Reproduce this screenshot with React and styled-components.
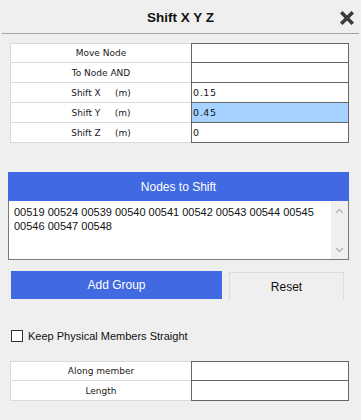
import React from "react";
import styled, { createGlobalStyle } from "styled-components";

const Global = createGlobalStyle`
  html, body {
    margin: 0;
    padding: 0;
    background: #efefef;
  }
  body {
    font-family: "Liberation Sans", Arial, sans-serif;
    color: #111;
  }
`;

const Dialog = styled.div`
  width: 361px;
  height: 420px;
  background: #efefef;
  display: flex;
  flex-direction: column;
`;

const TitleBar = styled.div`
  height: 33px;
  margin: 0 2px;
  border-bottom: 1px solid #a3a3a3;
  display: flex;
  align-items: center;
  justify-content: center;
  position: relative;
`;

const Title = styled.div`
  font-size: 13.5px;
  font-weight: bold;
  color: #111;
  padding-top: 1px;
`;

const CloseButton = styled.div`
  position: absolute;
  right: 5px;
  top: 11px;
  width: 14px;
  height: 14px;
  display: flex;
`;

const Grid = styled.div`
  display: grid;
  grid-template-columns: 181px 158px;
  margin: ${(p) => p.$margin};
`;

const LabelCell = styled.div`
  height: 20px;
  box-sizing: border-box;
  background: #fff;
  border: 1px solid #dadada;
  border-right: none;
  border-top: ${(p) => (p.$first ? "1px solid #dadada" : "none")};
  display: flex;
  align-items: center;
  justify-content: center;
  font-family: "DejaVu Sans", Verdana, sans-serif;
  font-size: 9px;
  color: #1a1a1a;
  white-space: pre;
`;

const ValueCell = styled.div`
  height: 20px;
  box-sizing: border-box;
  background: ${(p) => (p.$selected ? "#a6d2ff" : "#fff")};
  border: 1px solid #666;
  border-top: ${(p) => (p.$first ? "1px solid #666" : "none")};
  display: flex;
  align-items: center;
  padding-left: 1px;
  font-family: "DejaVu Sans", Verdana, sans-serif;
  font-size: 9.5px;
  letter-spacing: 0.6px;
  color: #111;
`;

const NodesPanel = styled.div`
  margin: 29px 12px 0 8px;
  display: flex;
  flex-direction: column;
`;

const NodesHeader = styled.div`
  height: 29px;
  background: #4169e1;
  color: #fff;
  display: flex;
  align-items: center;
  justify-content: center;
  font-size: 12px;
`;

const NodesBox = styled.div`
  height: 58px;
  background: #fff;
  border: 1px solid #7a7a7a;
  border-top: none;
  display: flex;
`;

const NodesText = styled.div`
  flex: 1;
  padding: 4px 0 0 5px;
  font-size: 11px;
  line-height: 14px;
  color: #111;
`;

const Scrollbar = styled.div`
  width: 17px;
  background: #f0f0f0;
  display: flex;
  flex-direction: column;
  justify-content: space-between;
  align-items: center;
  padding: 7px 0 6px;
`;

const ButtonRow = styled.div`
  margin: 11px 17px 0 11px;
  display: flex;
  gap: 7px;
`;

const Button = styled.div`
  height: 28px;
  box-sizing: border-box;
  display: flex;
  align-items: center;
  justify-content: center;
  font-size: 12px;
  width: ${(p) => p.$width};
  background: ${(p) => (p.$primary ? "#4169e1" : "#efefef")};
  color: ${(p) => (p.$primary ? "#fff" : "#111")};
  border: ${(p) => (p.$primary ? "none" : "1px solid #dcdcdc")};
  border-bottom: none;
  margin-top: ${(p) => (p.$primary ? "0" : "1px")};
`;

const CheckRow = styled.label`
  margin: 30px 0 0 11px;
  display: flex;
  align-items: center;
  gap: 5px;
  font-size: 11px;
  color: #111;
`;

const Box = styled.span`
  width: 12px;
  height: 12px;
  box-sizing: border-box;
  border: 1px solid #333;
  background: #fff;
`;

function CloseIcon() {
  return (
    <svg width="14" height="14" viewBox="0 0 14 14">
      <path
        d="M2.5 2.5 L11.5 11.5 M11.5 2.5 L2.5 11.5"
        stroke="#3a3a3a"
        strokeWidth="3.6"
        strokeLinecap="square"
      />
    </svg>
  );
}

function Chevron({ up }) {
  return (
    <svg width="9" height="6" viewBox="0 0 9 6">
      <path
        d={up ? "M1 5 L4.5 1.5 L8 5" : "M1 1 L4.5 4.5 L8 1"}
        fill="none"
        stroke="#b5b5b5"
        strokeWidth="1.4"
      />
    </svg>
  );
}

const shiftRows = [
  { label: "Move Node", value: "" },
  { label: "To Node AND", value: "" },
  { label: "Shift X     (m)", value: "0.15" },
  { label: "Shift Y     (m)", value: "0.45", selected: true },
  { label: "Shift Z     (m)", value: "0" },
];

const memberRows = [
  { label: "Along member", value: "" },
  { label: "Length", value: "" },
];

function Table({ rows, margin }) {
  return (
    <Grid $margin={margin}>
      {rows.map((r, i) => (
        <React.Fragment key={r.label}>
          <LabelCell $first={i === 0}>{r.label}</LabelCell>
          <ValueCell $first={i === 0} $selected={r.selected}>
            {r.value}
          </ValueCell>
        </React.Fragment>
      ))}
    </Grid>
  );
}

export default function App() {
  return (
    <>
      <Global />
      <Dialog>
        <TitleBar>
          <Title>Shift X Y Z</Title>
          <CloseButton>
            <CloseIcon />
          </CloseButton>
        </TitleBar>

        <Table rows={shiftRows} margin="9px 0 0 10px" />

        <NodesPanel>
          <NodesHeader>Nodes to Shift</NodesHeader>
          <NodesBox>
            <NodesText>
              00519 00524 00539 00540 00541 00542 00543 00544 00545 00546 00547 00548
            </NodesText>
            <Scrollbar>
              <Chevron up />
              <Chevron />
            </Scrollbar>
          </NodesBox>
        </NodesPanel>

        <ButtonRow>
          <Button $primary $width="211px">Add Group</Button>
          <Button $width="115px">Reset</Button>
        </ButtonRow>

        <CheckRow>
          <Box />
          Keep Physical Members Straight
        </CheckRow>

        <Table rows={memberRows} margin="19px 0 0 10px" />
      </Dialog>
    </>
  );
}
